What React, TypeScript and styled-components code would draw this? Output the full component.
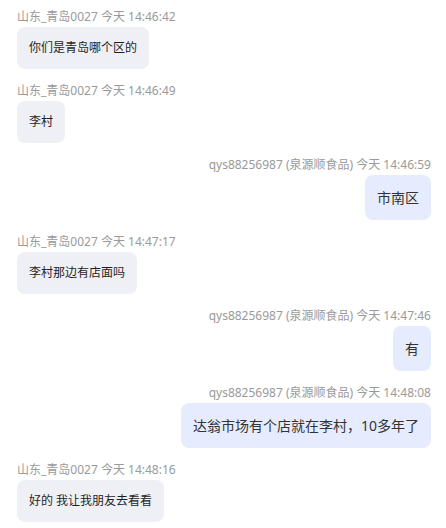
import React from 'react'
import styled, { createGlobalStyle } from 'styled-components'

const GlobalStyle = createGlobalStyle`
  html, body {
    margin: 0;
    padding: 0;
    background: #ffffff;
  }
  body {
    font-family: "Noto Sans", "Noto Sans CJK SC", sans-serif;
  }
`

const Wrapper = styled.div`
  width: 446px;
  height: 528px;
  box-sizing: border-box;
  padding: 8px 15px 0 17px;
  display: flex;
  flex-direction: column;
  gap: 13px;
  overflow: hidden;
  background: #ffffff;
`

const Message = styled.div<{ mine: boolean }>`
  display: flex;
  flex-direction: column;
  align-items: ${props => (props.mine ? 'flex-end' : 'flex-start')};
`

const Meta = styled.p`
  margin: 0 0 1px;
  font-size: 12px;
  line-height: 18px;
  color: #9a9a9a;
  white-space: nowrap;
`

const Bubble = styled.div<{ mine: boolean }>`
  padding: 12px;
  border-radius: 8px;
  background: ${props => (props.mine ? '#e6ecfd' : '#eff0f5')};
  color: ${props => (props.mine ? '#333333' : '#1f1f1f')};
  font-size: ${props => (props.mine ? '14px' : '12px')};
  line-height: ${props => (props.mine ? '21px' : '18px')};
  white-space: nowrap;
`

type Msg = {
  id: number
  author: string
  time: string
  text: string
  mine: boolean
}

const messages: Msg[] = [
  { id: 1, author: '山东_青岛0027', time: '今天 14:46:42', text: '你们是青岛哪个区的', mine: false },
  { id: 2, author: '山东_青岛0027', time: '今天 14:46:49', text: '李村', mine: false },
  { id: 3, author: 'qys88256987 (泉源顺食品)', time: '今天 14:46:59', text: '市南区', mine: true },
  { id: 4, author: '山东_青岛0027', time: '今天 14:47:17', text: '李村那边有店面吗', mine: false },
  { id: 5, author: 'qys88256987 (泉源顺食品)', time: '今天 14:47:46', text: '有', mine: true },
  { id: 6, author: 'qys88256987 (泉源顺食品)', time: '今天 14:48:08', text: '达翁市场有个店就在李村，10多年了', mine: true },
  { id: 7, author: '山东_青岛0027', time: '今天 14:48:16', text: '好的 我让我朋友去看看', mine: false },
]

export default function App() {
  return (
    <>
      <GlobalStyle />
      <Wrapper>
        {messages.map(item => (
          <Message key={item.id} mine={item.mine}>
            <Meta>{item.author} {item.time}</Meta>
            <Bubble mine={item.mine}>{item.text}</Bubble>
          </Message>
        ))}
      </Wrapper>
    </>
  )
}
